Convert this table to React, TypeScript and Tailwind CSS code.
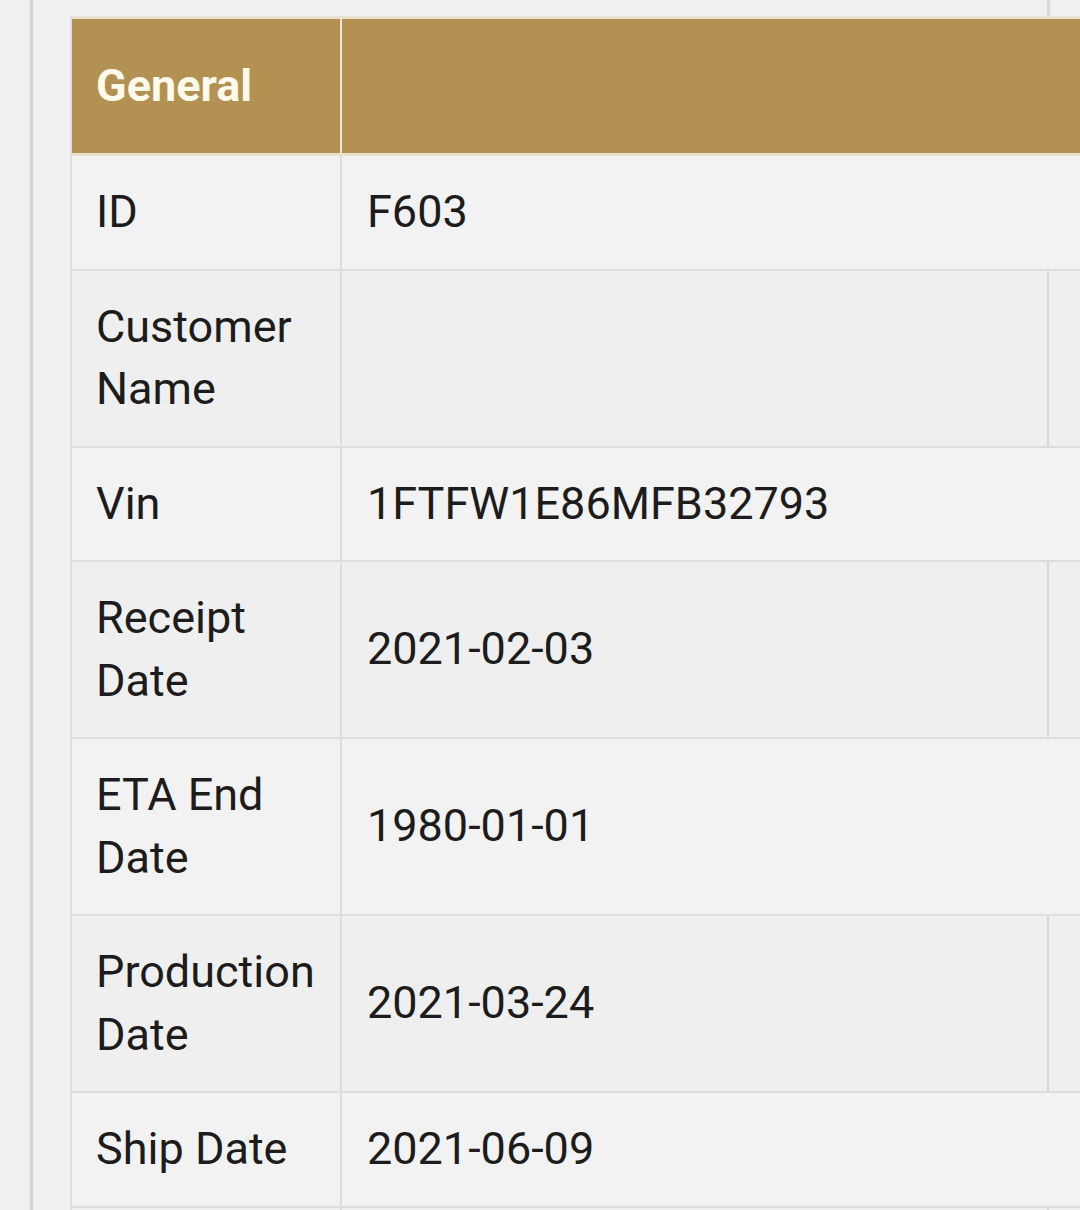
import React from "react";

type Row = { label: string; value: string; even: boolean };

const rows: Row[] = [
  { label: "ID", value: "F603", even: false },
  { label: "Customer Name", value: "", even: true },
  { label: "Vin", value: "1FTFW1E86MFB32793", even: false },
  { label: "Receipt Date", value: "2021-02-03", even: true },
  { label: "ETA End Date", value: "1980-01-01", even: false },
  { label: "Production Date", value: "2021-03-24", even: true },
  { label: "Ship Date", value: "2021-06-09", even: false },
  { label: "", value: "", even: true },
];

export default function App() {
  return (
    <div
      className="w-[1080px] h-[1210px] overflow-hidden bg-[#f0f0f0] text-[#1c1c1c]"
      style={{ fontFamily: "Roboto, 'Noto Sans', Arial, sans-serif" }}
    >
      <div className="pl-[30px] h-full">
        <div className="h-full border-l-[3px] border-[#d3d3d3] pl-[37px]">
          {/* spacer above the table */}
          <div className="flex h-[16px]">
            <div className="w-[977px] shrink-0" />
            <div className="w-[3px] shrink-0 bg-[#d8d8d8]" />
          </div>

          {/* table */}
          <div className="w-[1300px] border-l-2 border-[#dedede]">
            {/* header */}
            <div className="flex border-y-[3px] border-[#e9e0cd] bg-[#b29152] text-[45px] leading-[62px]">
              <div className="w-[268px] shrink-0 pl-[24px] py-[36px] font-bold text-[#fffaea]">
                General
              </div>
              <div className="w-[2px] shrink-0 bg-[#eee5d2]" />
              <div className="flex-1" />
            </div>

            {rows.map((r, i) => (
              <div
                key={i}
                className={`flex border-b-2 border-[#dddddd] text-[45px] leading-[62.5px] ${
                  r.even ? "bg-[#efefef]" : "bg-[#f2f2f2]"
                }`}
              >
                <div className="w-[270px] shrink-0 pl-[24px] pr-[8px] py-[25px] border-r-2 border-[#dddddd]">
                  {r.label || "\u00a0"}
                </div>
                <div className="w-[705px] shrink-0 px-[25px] py-[25px] flex items-center">
                  {r.value}
                </div>
                <div
                  className={`flex-1 ${
                    r.even ? "border-l-2 border-[#d6d6d6]" : ""
                  }`}
                />
              </div>
            ))}
          </div>
        </div>
      </div>
    </div>
  );
}
